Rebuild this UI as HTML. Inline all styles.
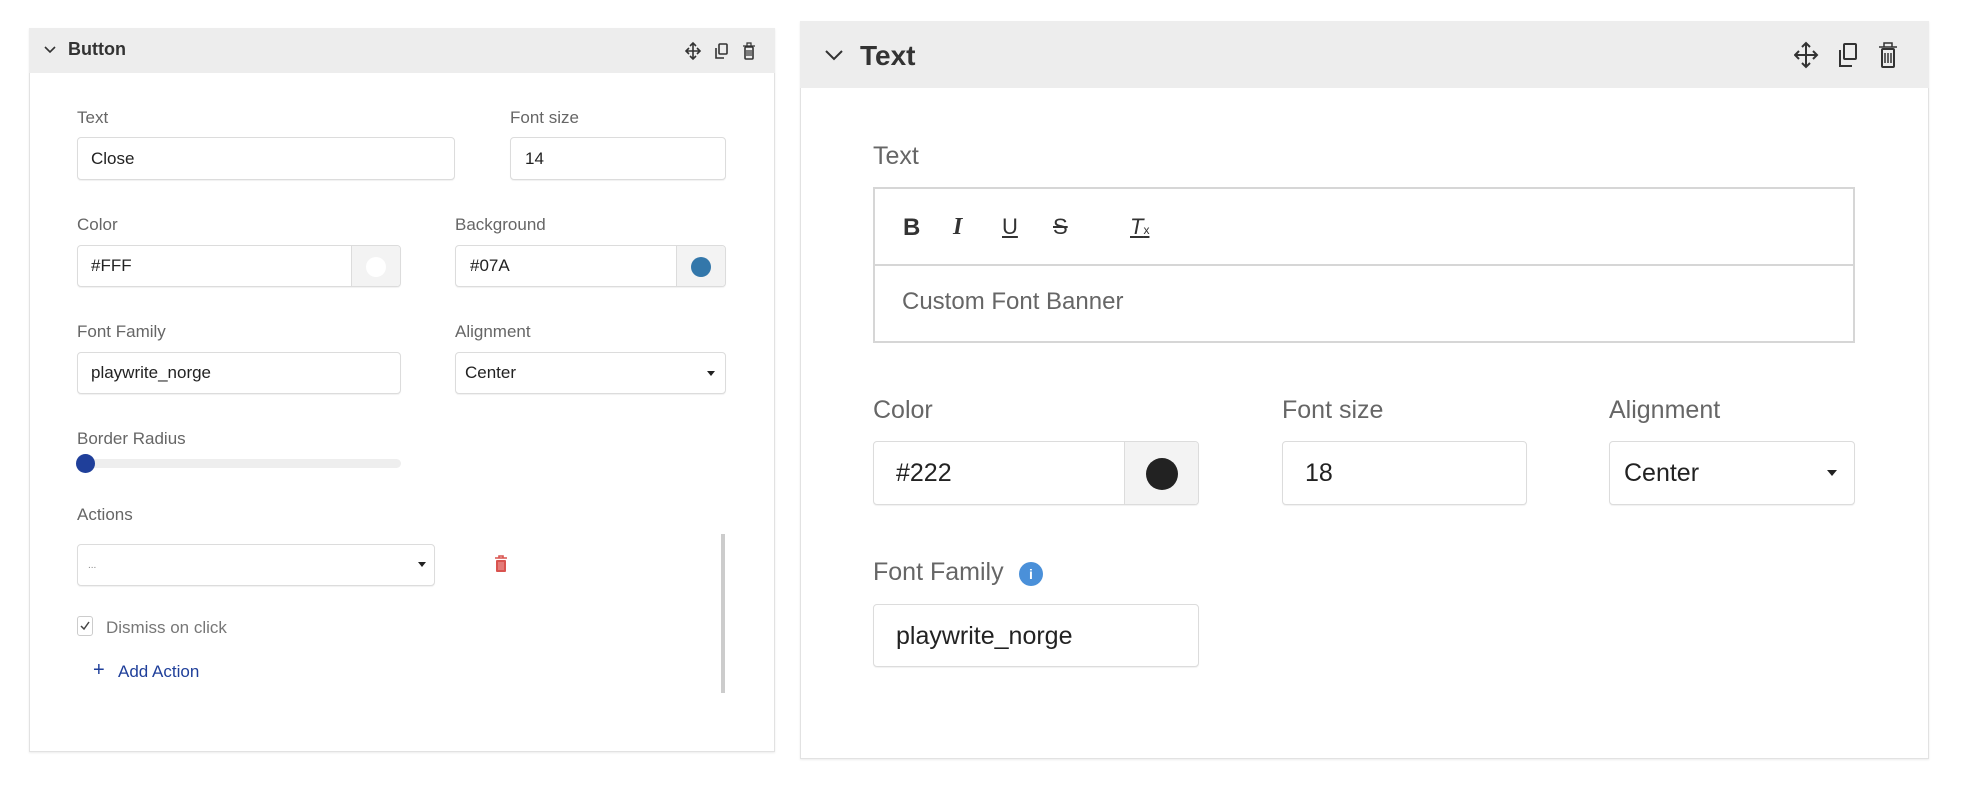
<!DOCTYPE html>
<html><head><style>
*{box-sizing:border-box;margin:0;padding:0}
body{width:1970px;height:792px;background:#fff;font-family:"Liberation Sans",sans-serif;position:relative;overflow:hidden;color:#222}
.a{position:absolute}
.panel{border:1px solid #e2e2e2;box-shadow:0 1px 2px rgba(0,0,0,.08)}
.hdr{background:#ededed}
.lbl{color:#666}
.inp{border:1px solid #dcdcdc;border-radius:4px;background:#fff;box-shadow:0 1px 1px rgba(0,0,0,.06)}
.addon{background:#f3f3f3;border-left:1px solid #dcdcdc}
</style></head><body>
<!-- LEFT PANEL -->
<div class="a panel" style="left:29px;top:28px;width:746px;height:724px"></div>
<div class="a hdr" style="left:29px;top:28px;width:746px;height:45px"></div>
<svg class="a" style="left:44px;top:46px" width="12" height="8" viewBox="0 0 12 8"><path d="M1 1l5 5 5-5" fill="none" stroke="#333" stroke-width="1.6"/></svg>
<div class="a" style="left:68px;top:39px;font-size:18px;font-weight:bold;color:#333">Button</div>
<svg class="a" style="left:685px;top:41px" width="76" height="20" viewBox="0 0 76 20">
<g fill="none" stroke="#333" stroke-width="1.6"><path d="M8 2v16M1 10h14"/><path d="M5 5l3-3 3 3M5 15l3 3 3-3M4 7l-3 3 3 3M12 7l3 3-3 3"/>
<rect x="34" y="3" width="8" height="10" rx="1"/><path d="M31 7v10h8"/>
<rect x="60" y="6" width="8" height="12" rx="1"/><path d="M58 5h12M62 5V2h4v3M62 9v6M64 9v6M66 9v6" stroke-width="1.2"/></g></svg>

<div class="a lbl" style="left:77px;top:108px;font-size:17px">Text</div>
<div class="a lbl" style="left:510px;top:108px;font-size:17px">Font size</div>
<div class="a inp" style="left:77px;top:137px;width:378px;height:43px"></div>
<div class="a" style="left:91px;top:149px;font-size:17px">Close</div>
<div class="a inp" style="left:510px;top:137px;width:216px;height:43px"></div>
<div class="a" style="left:525px;top:149px;font-size:17px">14</div>

<div class="a lbl" style="left:77px;top:215px;font-size:17px">Color</div>
<div class="a lbl" style="left:455px;top:215px;font-size:17px">Background</div>
<div class="a inp" style="left:77px;top:245px;width:324px;height:42px;overflow:hidden"><div class="a addon" style="left:273px;top:0;width:51px;height:42px"></div><div class="a" style="left:288px;top:11px;width:20px;height:20px;border-radius:50%;background:#fff"></div></div>
<div class="a" style="left:91px;top:256px;font-size:17px">#FFF</div>
<div class="a inp" style="left:455px;top:245px;width:271px;height:42px;overflow:hidden"><div class="a addon" style="left:220px;top:0;width:51px;height:42px"></div><div class="a" style="left:235px;top:11px;width:20px;height:20px;border-radius:50%;background:#3377aa"></div></div>
<div class="a" style="left:470px;top:256px;font-size:17px">#07A</div>

<div class="a lbl" style="left:77px;top:322px;font-size:17px">Font Family</div>
<div class="a lbl" style="left:455px;top:322px;font-size:17px">Alignment</div>
<div class="a inp" style="left:77px;top:352px;width:324px;height:42px"></div>
<div class="a" style="left:91px;top:363px;font-size:17px">playwrite_norge</div>
<div class="a inp" style="left:455px;top:352px;width:271px;height:42px"></div>
<div class="a" style="left:465px;top:363px;font-size:17px">Center</div>
<div class="a" style="left:707px;top:371px;border:4px solid transparent;border-top:5px solid #222"></div>

<div class="a lbl" style="left:77px;top:429px;font-size:17px">Border Radius</div>
<div class="a" style="left:77px;top:459px;width:324px;height:9px;border-radius:5px;background:#eee"></div>
<div class="a" style="left:76px;top:454px;width:19px;height:19px;border-radius:50%;background:#1f3f9a"></div>

<div class="a lbl" style="left:77px;top:505px;font-size:17px">Actions</div>
<div class="a inp" style="left:77px;top:544px;width:358px;height:42px"></div>
<div class="a" style="left:88px;top:560px;font-size:10px;color:#888">...</div>
<div class="a" style="left:418px;top:562px;border:4px solid transparent;border-top:5px solid #222"></div>
<svg class="a" style="left:494px;top:555px" width="14" height="18" viewBox="0 0 14 18"><path d="M1 3h12M5 3V1h4v2" stroke="#d9534f" stroke-width="1.6" fill="none"/><rect x="2" y="5" width="10" height="12" rx="1" fill="#d9534f"/><path d="M5 7v8M7 7v8M9 7v8" stroke="#f3b7b5" stroke-width=".8"/></svg>
<div class="a" style="left:721px;top:534px;width:4px;height:159px;background:#ccc"></div>
<div class="a" style="left:77px;top:616px;width:16px;height:20px;border:1px solid #ccc;border-radius:3px"></div>
<svg class="a" style="left:79px;top:620px" width="12" height="12" viewBox="0 0 12 12"><path d="M2 6l3 3 5-7" fill="none" stroke="#444" stroke-width="1.5"/></svg>
<div class="a" style="left:106px;top:618px;font-size:17px;color:#777">Dismiss on click</div>
<div class="a" style="left:93px;top:659px;font-size:20px;color:#1f3f9a">+</div>
<div class="a" style="left:118px;top:662px;font-size:17px;color:#1f3f9a">Add Action</div>

<!-- RIGHT PANEL -->
<div class="a panel" style="left:800px;top:21px;width:1129px;height:738px"></div>
<div class="a hdr" style="left:800px;top:21px;width:1129px;height:67px"></div>
<svg class="a" style="left:825px;top:50px" width="18" height="11" viewBox="0 0 18 11"><path d="M1 1l8 8 8-8" fill="none" stroke="#333" stroke-width="2"/></svg>
<div class="a" style="left:860px;top:40px;font-size:28px;font-weight:bold;color:#333">Text</div>
<svg class="a" style="left:1794px;top:41px" width="110" height="28" viewBox="0 0 110 28">
<g fill="none" stroke="#333" stroke-width="2"><path d="M12 2v24M1 14h22"/><path d="M8 6l4-4 4 4M8 22l4 4 4-4M5 10l-4 4 4 4M19 10l4 4-4 4"/>
<rect x="50" y="3" width="12" height="15" rx="1"/><path d="M46 9v16h12"/>
<rect x="88" y="8" width="12" height="18" rx="1"/><path d="M85 6h18M90 6V2h8v4M91 12v10M94 12v10M97 12v10" stroke-width="1.5"/></g></svg>

<div class="a lbl" style="left:873px;top:142px;font-size:25px">Text</div>
<div class="a" style="left:873px;top:187px;width:982px;height:156px;border:2px solid #d6d6d6"></div>
<div class="a" style="left:873px;top:264px;width:982px;height:2px;background:#d6d6d6"></div>
<div class="a" style="left:903px;top:214px;font-size:24px;font-weight:bold;color:#333">B</div>
<div class="a" style="left:953px;top:214px;font-size:24px;font-style:italic;font-family:'Liberation Serif',serif;font-weight:bold;color:#333">I</div>
<div class="a" style="left:1002px;top:214px;font-size:22px;text-decoration:underline;color:#333">U</div>
<div class="a" style="left:1053px;top:214px;font-size:22px;text-decoration:line-through;color:#333">S</div>
<div class="a" style="left:1130px;top:214px;font-size:22px;font-style:italic;text-decoration:underline;color:#333">T<span style="font-size:12px;font-style:normal;text-decoration:none">x</span></div>
<div class="a" style="left:902px;top:288px;font-size:24px;color:#666">Custom Font Banner</div>

<div class="a lbl" style="left:873px;top:396px;font-size:25px">Color</div>
<div class="a lbl" style="left:1282px;top:396px;font-size:25px">Font size</div>
<div class="a lbl" style="left:1609px;top:396px;font-size:25px">Alignment</div>
<div class="a inp" style="left:873px;top:441px;width:326px;height:64px;overflow:hidden"><div class="a addon" style="left:250px;top:0;width:76px;height:64px"></div><div class="a" style="left:272px;top:16px;width:32px;height:32px;border-radius:50%;background:#222"></div></div>
<div class="a" style="left:896px;top:459px;font-size:25px">#222</div>
<div class="a inp" style="left:1282px;top:441px;width:245px;height:64px"></div>
<div class="a" style="left:1305px;top:459px;font-size:25px">18</div>
<div class="a inp" style="left:1609px;top:441px;width:246px;height:64px"></div>
<div class="a" style="left:1624px;top:459px;font-size:25px">Center</div>
<div class="a" style="left:1827px;top:470px;border:5px solid transparent;border-top:6px solid #222"></div>

<div class="a lbl" style="left:873px;top:558px;font-size:25px">Font Family</div>
<div class="a" style="left:1019px;top:562px;width:24px;height:24px;border-radius:50%;background:#4a90d9;color:#fff;font-size:14px;font-weight:bold;text-align:center;line-height:24px">i</div>
<div class="a inp" style="left:873px;top:604px;width:326px;height:63px"></div>
<div class="a" style="left:896px;top:622px;font-size:25px">playwrite_norge</div>
</body></html>
